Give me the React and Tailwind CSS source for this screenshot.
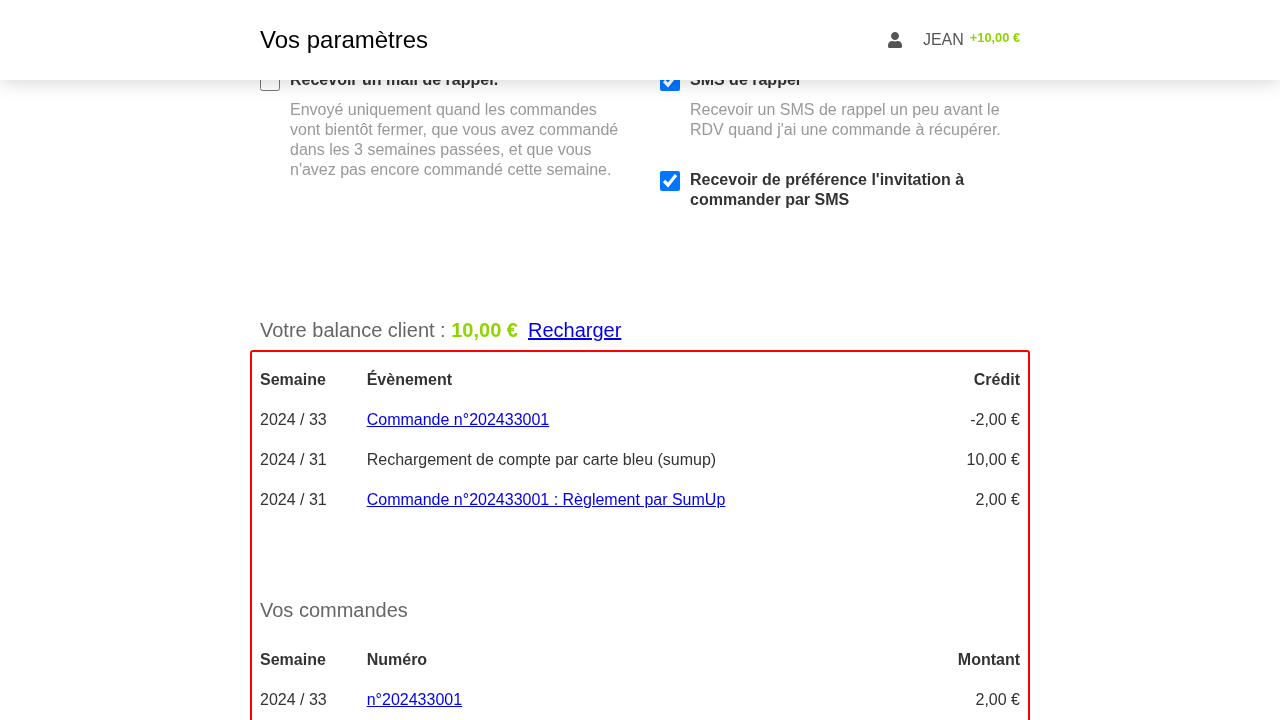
import { FaUser } from 'react-icons/fa';

const mouvements = [
  { semaine: '2024 / 33', label: 'Commande n°202433001', href: '#', credit: '-2,00 €' },
  { semaine: '2024 / 31', label: 'Rechargement de compte par carte bleu (sumup)', credit: '10,00 €' },
  { semaine: '2024 / 31', label: 'Commande n°202433001 : Règlement par SumUp', href: '#', credit: '2,00 €' },
];

const commandes = [
  { semaine: '2024 / 33', label: 'n°202433001', href: '#', credit: '2,00 €' },
];

function Option({ checked, title, children }) {
  return (
    <div className="flex gap-[10px]">
      <input type="checkbox" checked={checked} readOnly className="w-5 h-5 m-0 mt-px shrink-0" />
      <div>
        <div className="font-bold text-[#333]">{title}</div>
        {children && <p className="mt-[10px] text-[#999]">{children}</p>}
      </div>
    </div>
  );
}

function Table({ headers, rows }) {
  return (
    <table className="w-full border-collapse">
      <thead>
        <tr className="h-10 font-bold">
          <th className="w-[106.7px] p-0 text-left">{headers[0]}</th>
          <th className="p-0 text-left">{headers[1]}</th>
          <th className="p-0 text-right">{headers[2]}</th>
        </tr>
      </thead>
      <tbody>
        {rows.map((r, i) => (
          <tr key={i} className="h-10">
            <td className="p-0">{r.semaine}</td>
            <td className="p-0">
              {r.href ? <a href={r.href} className="text-[#0000ee] underline">{r.label}</a> : r.label}
            </td>
            <td className="p-0 text-right">{r.credit}</td>
          </tr>
        ))}
      </tbody>
    </table>
  );
}

export default function App() {
  return (
    <div className="relative h-[720px] overflow-hidden bg-white font-['Liberation_Sans',Arial,sans-serif] text-base leading-5 text-[#333]">
      <header className="absolute inset-x-0 top-0 z-10 h-20 bg-white shadow-[0_0_20px_rgba(0,0,0,0.2)]">
        <div className="mx-auto flex h-full w-[760px] items-center justify-between will-change-transform">
          <h1 className="text-2xl text-black">Vos paramètres</h1>
          <div className="flex items-center text-[#555]">
            <FaUser className="w-[14px] h-4" />
            <span className="ml-[21px]">JEAN</span>
            <span className="ml-[6px] mb-1 text-[12.8px] font-bold text-[#8fd400]">+10,00 €</span>
          </div>
        </div>
      </header>

      <main className="mx-auto w-[760px] pt-[70px] will-change-transform">
        <div className="grid grid-cols-2 gap-x-10">
          <Option checked={false} title="Recevoir un mail de rappel.">
            Envoyé uniquement quand les commandes vont bientôt fermer, que vous avez commandé dans les 3 semaines passées, et que vous n'avez pas encore commandé cette semaine.
          </Option>
          <div className="flex flex-col gap-[30px]">
            <Option checked title="SMS de rappel">
              Recevoir un SMS de rappel un peu avant le RDV quand j'ai une commande à récupérer.
            </Option>
            <Option checked title="Recevoir de préférence l'invitation à commander par SMS" />
          </div>
        </div>

        <h2 className="mt-[105px] h-[35px] text-xl leading-[30px] text-[#666]">
          Votre balance client : <span className="font-bold text-[#8fd400]">10,00 €</span>
          <a href="#" className="ml-[10px] text-[#0000ee] underline">Recharger</a>
        </h2>

        <section className="-mx-[10px] rounded-[3px] border-2 border-[#ff0000] px-2 pt-2 pb-10">
          <Table headers={['Semaine', 'Évènement', 'Crédit']} rows={mouvements} />
          <h2 className="mt-[60px] h-10 text-xl leading-[60px] text-[#666]">Vos commandes</h2>
          <div className="mt-[20px]">
            <Table headers={['Semaine', 'Numéro', 'Montant']} rows={commandes} />
          </div>
        </section>
      </main>
    </div>
  );
}
